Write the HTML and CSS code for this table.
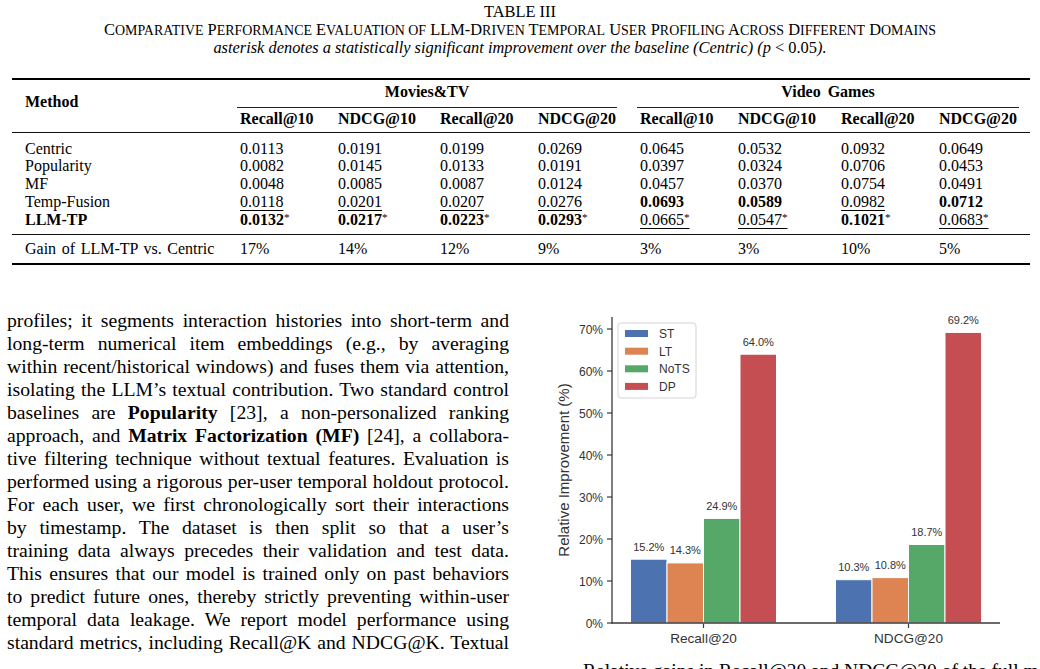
FILE: index.html
```html
<!DOCTYPE html>
<html>
<head>
<meta charset="utf-8">
<link rel="stylesheet" href="styles.css">
</head>
<body>
<div class="page">
  <div class="caption">
    <div>TABLE III</div>
    <div class="title">C<span class="s">omparative</span> P<span class="s">erformance</span> E<span class="s">valuation of</span> LLM-D<span class="s">riven</span> T<span class="s">emporal</span> U<span class="s">ser</span> P<span class="s">rofiling</span> A<span class="s">cross</span> D<span class="s">ifferent</span> D<span class="s">omains</span></div>
    <div class="note"><i>asterisk denotes a statistically significant improvement over the baseline (Centric) (p</i> &lt; 0.05<i>).</i></div>
  </div>

  <div class="tbl">
    <div class="thead">
      <div class="method">Method</div>
      <div class="grp grp-mv">Movies&amp;TV</div>
      <div class="grp grp-vg">Video Games</div>
      <div class="sub c2">Recall@10</div>
      <div class="sub">NDCG@10</div>
      <div class="sub">Recall@20</div>
      <div class="sub">NDCG@20</div>
      <div class="sub">Recall@10</div>
      <div class="sub">NDCG@10</div>
      <div class="sub">Recall@20</div>
      <div class="sub">NDCG@20</div>
    </div>
    <div class="tbody">
      <div class="row"><div class="name">Centric</div><div>0.0113</div><div>0.0191</div><div>0.0199</div><div>0.0269</div><div>0.0645</div><div>0.0532</div><div>0.0932</div><div>0.0649</div></div>
      <div class="row"><div class="name">Popularity</div><div>0.0082</div><div>0.0145</div><div>0.0133</div><div>0.0191</div><div>0.0397</div><div>0.0324</div><div>0.0706</div><div>0.0453</div></div>
      <div class="row"><div class="name">MF</div><div>0.0048</div><div>0.0085</div><div>0.0087</div><div>0.0124</div><div>0.0457</div><div>0.0370</div><div>0.0754</div><div>0.0491</div></div>
      <div class="row"><div class="name">Temp-Fusion</div><div><u>0.0118</u></div><div><u>0.0201</u></div><div><u>0.0207</u></div><div><u>0.0276</u></div><div><b>0.0693</b></div><div><b>0.0589</b></div><div><u>0.0982</u></div><div><b>0.0712</b></div></div>
      <div class="row"><div class="name"><b>LLM-TP</b></div><div><b>0.0132</b><span class="ast">*</span></div><div><b>0.0217</b><span class="ast">*</span></div><div><b>0.0223</b><span class="ast">*</span></div><div><b>0.0293</b><span class="ast">*</span></div><div><u>0.0665<span class="ast">*</span></u></div><div><u>0.0547<span class="ast">*</span></u></div><div><b>0.1021</b><span class="ast">*</span></div><div><u>0.0683<span class="ast">*</span></u></div></div>
    </div>
    <div class="tfoot">
      <div class="row"><div class="name gain">Gain of LLM-TP vs. Centric</div><div>17%</div><div>14%</div><div>12%</div><div>9%</div><div>3%</div><div>3%</div><div>10%</div><div>5%</div></div>
    </div>
  </div>

  <div class="main">
    <div class="text">
      <span class="ln">profiles; it segments interaction histories into short-term and</span>
      <span class="ln">long-term numerical item embeddings (e.g., by averaging</span>
      <span class="ln">within recent/historical windows) and fuses them via attention,</span>
      <span class="ln">isolating the LLM’s textual contribution. Two standard control</span>
      <span class="ln">baselines are <b>Popularity</b> [23], a non-personalized ranking</span>
      <span class="ln">approach, and <b>Matrix Factorization (MF)</b> [24], a collabora-</span>
      <span class="ln">tive filtering technique without textual features. Evaluation is</span>
      <span class="ln">performed using a rigorous per-user temporal holdout protocol.</span>
      <span class="ln">For each user, we first chronologically sort their interactions</span>
      <span class="ln">by timestamp. The dataset is then split so that a user’s</span>
      <span class="ln">training data always precedes their validation and test data.</span>
      <span class="ln">This ensures that our model is trained only on past behaviors</span>
      <span class="ln">to predict future ones, thereby strictly preventing within-user</span>
      <span class="ln">temporal data leakage. We report model performance using</span>
      <span class="ln">standard metrics, including Recall@K and NDCG@K. Textual</span>
    </div>
    <div class="figure">
      <svg class="chart" width="500" height="359" viewBox="540 300 500 359" xmlns="http://www.w3.org/2000/svg">
        <g class="ticks" stroke="#3a3a3a" stroke-width="1.2">
          <line x1="607" y1="623" x2="612" y2="623"/>
          <line x1="607" y1="581" x2="612" y2="581"/>
          <line x1="607" y1="539" x2="612" y2="539"/>
          <line x1="607" y1="497" x2="612" y2="497"/>
          <line x1="607" y1="455" x2="612" y2="455"/>
          <line x1="607" y1="413" x2="612" y2="413"/>
          <line x1="607" y1="371" x2="612" y2="371"/>
          <line x1="607" y1="329" x2="612" y2="329"/>
          <line x1="703.5" y1="623" x2="703.5" y2="628"/>
          <line x1="908.5" y1="623" x2="908.5" y2="628"/>
        </g>
        <g font-family="Liberation Sans, Arial, sans-serif" font-size="12" fill="#333" text-anchor="end">
          <text x="603" y="627.5">0%</text>
          <text x="603" y="585.5">10%</text>
          <text x="603" y="543.5">20%</text>
          <text x="603" y="501.5">30%</text>
          <text x="603" y="459.5">40%</text>
          <text x="603" y="417.5">50%</text>
          <text x="603" y="375.5">60%</text>
          <text x="603" y="333.5">70%</text>
        </g>
        <text x="569" y="470" transform="rotate(-90 569 470)" font-family="Liberation Sans, Arial, sans-serif" font-size="15" fill="#333" text-anchor="middle">Relative Improvement (%)</text>

        <g stroke="#fff" stroke-width="1">
          <rect x="630.5" y="559.2" width="36.5" height="63.8" fill="#4c72b0"/>
          <rect x="667" y="562.9" width="36.5" height="60.1" fill="#dd8452"/>
          <rect x="703.5" y="518.4" width="36.5" height="104.6" fill="#55a868"/>
          <rect x="740" y="354.2" width="36.5" height="268.8" fill="#c44e52"/>
          <rect x="835.5" y="579.7" width="36.5" height="43.3" fill="#4c72b0"/>
          <rect x="872" y="577.6" width="36.5" height="45.4" fill="#dd8452"/>
          <rect x="908.5" y="544.5" width="36.5" height="78.5" fill="#55a868"/>
          <rect x="945" y="332.4" width="36.5" height="290.6" fill="#c44e52"/>
        </g>
        <g font-family="Liberation Sans, Arial, sans-serif" font-size="11" fill="#333" text-anchor="middle">
          <text x="648.75" y="550.7">15.2%</text>
          <text x="685.25" y="554.4">14.3%</text>
          <text x="721.75" y="509.9">24.9%</text>
          <text x="758.25" y="345.7">64.0%</text>
          <text x="853.75" y="571.2">10.3%</text>
          <text x="890.25" y="569.1">10.8%</text>
          <text x="926.75" y="536">18.7%</text>
          <text x="963.25" y="323.9">69.2%</text>
        </g>

        <line x1="612" y1="317" x2="612" y2="623.6" stroke="#3a3a3a" stroke-width="1.3"/>
        <line x1="611.4" y1="623" x2="1000" y2="623" stroke="#3a3a3a" stroke-width="1.3"/>

        <g font-family="Liberation Sans, Arial, sans-serif" font-size="13.6" fill="#333" text-anchor="middle">
          <text x="703.5" y="643">Recall@20</text>
          <text x="908.5" y="643">NDCG@20</text>
        </g>

        <rect x="618" y="323" width="78" height="75" rx="3" fill="#fff" fill-opacity="0.85" stroke="#d4d4d4" stroke-width="1"/>
        <rect x="625" y="330" width="23" height="7" fill="#4c72b0"/>
        <rect x="625" y="347.7" width="23" height="7" fill="#dd8452"/>
        <rect x="625" y="365.3" width="23" height="7" fill="#55a868"/>
        <rect x="625" y="382.9" width="23" height="7" fill="#c44e52"/>
        <g font-family="Liberation Sans, Arial, sans-serif" font-size="12" fill="#333">
          <text x="659" y="338">ST</text>
          <text x="659" y="355.7">LT</text>
          <text x="659" y="373.3">NoTS</text>
          <text x="659" y="390.9">DP</text>
        </g>
      </svg>
      <div class="figcap">Relative gains in Recall@20 and NDCG@20 of the full model over its ablated variants</div>
    </div>
  </div>
</div>
</body>
</html>
```

FILE: styles.css
```css
html, body {
  margin: 0;
  padding: 0;
  background: #fff;
}

body {
  color: #000;
  font-family: "Liberation Serif", "Times New Roman", serif;
  overflow: hidden;
}

.page {
  width: 1040px;
  height: 669px;
  overflow: hidden;
}

.caption {
  text-align: center;
  font-size: 16.4px;
  line-height: 17.5px;
  padding-top: 3px;
  height: 53.5px;
}

.caption .title .s {
  text-transform: uppercase;
  font-size: 0.85em;
}

.tbl {
  margin: 21px 10px 0 12px;
  font-size: 16px;
}

.thead,
.row {
  display: grid;
  grid-template-columns: 228px 98px 102px 98px 102px 98px 103px 98px 91px;
}

.thead {
  grid-template-rows: 28px 24px;
  border-top: 2px solid #000;
  border-bottom: 1px solid #111;
  font-weight: bold;
  line-height: 18px;
}

.method {
  grid-row: 1 / 3;
  grid-column: 1;
  padding: 13px 0 0 13px;
}

.grp {
  grid-row: 1;
  text-align: center;
  padding-top: 3px;
  border-bottom: 1px solid #222;
}

.grp-mv {
  grid-column: 2 / 6;
  margin: 0 23px 0 -3px;
}

.grp-vg {
  grid-column: 6 / 10;
  margin: 0 11px 0 -3px;
  word-spacing: 3px;
}

.sub {
  grid-row: 2;
  padding-top: 2px;
}

.sub.c2 {
  grid-column: 2;
}

.tbody {
  padding: 7px 0 6px;
  border-bottom: 1px solid #111;
}

.row {
  line-height: 17.75px;
}

.row .name {
  padding-left: 13px;
}

.row .gain {
  word-spacing: 1.6px;
}

.tfoot {
  padding: 5px 0;
  border-bottom: 2px solid #000;
}

.tfoot .row {
  line-height: 18px;
}

u {
  text-decoration-thickness: 1px;
  text-underline-offset: 3px;
}

.ast {
  font-weight: normal;
  font-size: 11px;
  vertical-align: 4px;
  line-height: 0;
}

.main {
  display: flex;
  margin-top: 35px;
  gap: 31px;
}

.text {
  width: 502px;
  margin: 9px 0 0 7px;
  font-size: 19.7px;
  line-height: 23px;
}

.ln {
  display: block;
  text-align: justify;
  text-align-last: justify;
}

.figure {
  width: 500px;
  flex: none;
}

.chart {
  display: block;
}

.figcap {
  padding-left: 43px;
  font-size: 19.5px;
  line-height: 23px;
  white-space: nowrap;
}
```
